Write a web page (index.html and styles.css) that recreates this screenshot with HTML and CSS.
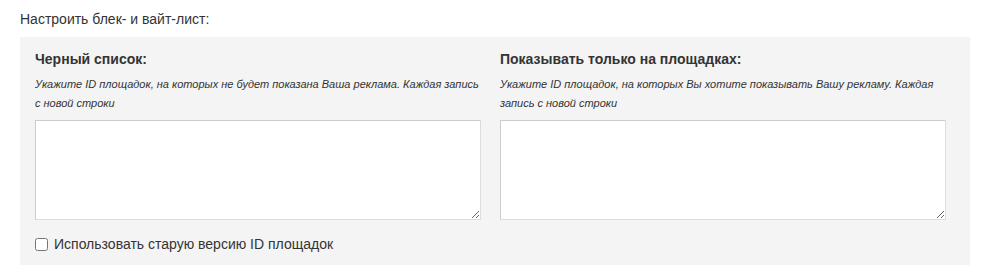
FILE: index.html
```html
<!DOCTYPE html>
<html lang="ru">
<head>
<meta charset="utf-8">
<link rel="stylesheet" href="styles.css">
</head>
<body>
<div class="page">
  <div class="title">Настроить блек- и вайт-лист:</div>
  <div class="panel">
    <div class="cols">
      <div class="col">
        <div class="heading">Черный список:</div>
        <div class="hint">Укажите ID площадок, на которых не будет показана Ваша реклама. Каждая запись с новой строки</div>
        <textarea class="area"></textarea>
      </div>
      <div class="col">
        <div class="heading">Показывать только на площадках:</div>
        <div class="hint">Укажите ID площадок, на которых Вы хотите показывать Вашу рекламу. Каждая запись с новой строки</div>
        <textarea class="area"></textarea>
      </div>
    </div>
    <label class="check"><input type="checkbox" class="box"><span>Использовать старую версию ID площадок</span></label>
  </div>
</div>
</body>
</html>
```
FILE: styles.css
```css
* { box-sizing: border-box; }
html, body { margin: 0; padding: 0; background: #fff; }
body {
  font-family: "Liberation Sans", Arial, sans-serif;
  color: #333;
  font-size: 14px;
}
.page { padding: 10px 12px 0 20px; }
.title { font-size: 14px; line-height: 18px; height: 27px; }
.panel {
  width: 950px;
  background: #f4f4f4;
  padding: 12px 24px 12px 15px;
}
.cols {
  display: grid;
  grid-template-columns: 446px 446px;
  column-gap: 19px;
}
.heading {
  font-weight: bold;
  font-size: 14px;
  line-height: 20px;
}
.hint {
  font-style: italic;
  font-size: 11px;
  line-height: 19px;
  margin-top: 6px;
  height: 45px;
}
.area {
  display: block;
  width: 446px;
  height: 100px;
  border: 1px solid #ccc;
  border-bottom-color: #ddd;
  border-right-color: #ddd;
  background: #fff;
  margin: 0;
  resize: both;
}
.check {
  display: flex;
  align-items: center;
  margin-top: 15px;
  height: 18px;
  font-size: 14px;
}
.box {
  margin: 0 6px 0 0;
  width: 13px;
  height: 13px;
}
```
